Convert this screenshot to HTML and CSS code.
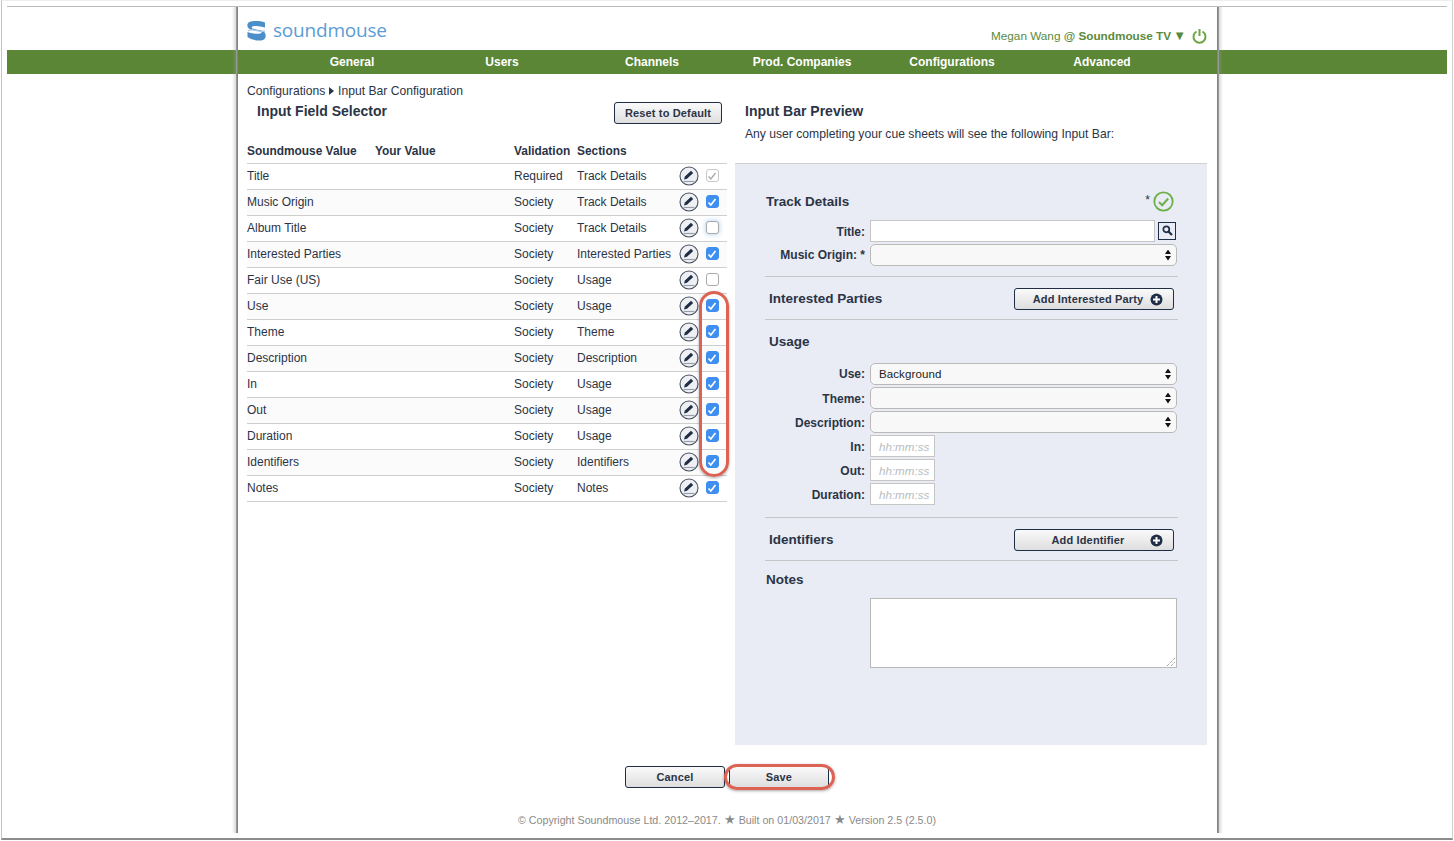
FILE: index.html
```html
<!DOCTYPE html>
<html lang="en">
<head>
<meta charset="utf-8">
<title>Input Bar Configuration</title>
<link rel="stylesheet" href="styles.css">
</head>
<body>
<div class="window">
  <div class="viewport">
    <div class="column">
      <header class="top">
        <div class="logo">
          <svg class="logo-mark" width="19" height="20" viewBox="0 0 19 20"><path d="M18 1.500C13-.2 6-.3 2.500 1 -.5 2.300-.3 6.500 2.500 8c3.500 1.800 9 1.500 11.500 2.800.9.5.9 1.100 0 1.400-3.500 1-8.500.6-13.500-1.200v5c5 3.500 12 4.300 15.500 3C19.500 17.500 19.500 12.500 16.500 10.500 13 8.500 7.500 8.800 5.200 7.200 4.300 6.500 4.600 5.600 6 5.300c4-.6 8 0 12 1.300z" fill="#4a8fc9"/><path d="M1 9.800c3-1.200 6-1 9-.1s5 .9 8 .1" fill="none" stroke="#a8cbe8" stroke-width="1.300"/></svg>
          <span class="logo-text">soundmouse</span>
        </div>
        <div class="user">
          <span>Megan Wang <b>@ Soundmouse TV</b></span>
          <span class="user-caret">▼</span>
          <svg class="power" width="15" height="16" viewBox="0 0 15 16"><path d="M4.500 3.500a6 6 0 1 0 6 0" fill="none" stroke="#6fa544" stroke-width="2"/><path d="M7.500 1v7" fill="none" stroke="#6fa544" stroke-width="2"/></svg>
        </div>
      </header>
      <nav class="nav">
        <a>General</a><a>Users</a><a>Channels</a><a>Prod. Companies</a><a>Configurations</a><a>Advanced</a>
      </nav>
      <main class="main">
        <section class="left">
          <div class="crumb">Configurations <span class="crumb-arrow"></span> Input Bar Configuration</div>
          <div class="title-row">
            <h1 class="title">Input Field Selector</h1>
            <button class="btn reset">Reset to Default</button>
          </div>
          <div class="grid head"><span>Soundmouse Value</span><span>Your Value</span><span>Validation</span><span>Sections</span></div>

          <div class="grid row"><span>Title</span><span></span><span>Required</span><span>Track Details</span><span class="edit"><svg width="20" height="20" viewBox="0 0 20 20"><use href="#pen"/></svg></span><span class="box off"><svg width="10" height="10" viewBox="0 0 10 10"><path d="M1.500 5.500l2.300 2.500 4.700-6" fill="none" stroke="#aaa" stroke-width="1.300"/></svg></span></div>
          <div class="grid row alt"><span>Music Origin</span><span></span><span>Society</span><span>Track Details</span><span class="edit"><svg width="20" height="20" viewBox="0 0 20 20"><use href="#pen"/></svg></span><span class="box on"><svg width="10" height="10" viewBox="0 0 10 10"><use href="#tick"/></svg></span></div>
          <div class="grid row"><span>Album Title</span><span></span><span>Society</span><span>Track Details</span><span class="edit"><svg width="20" height="20" viewBox="0 0 20 20"><use href="#pen"/></svg></span><span class="box focus"></span></div>
          <div class="grid row alt"><span>Interested Parties</span><span></span><span>Society</span><span>Interested Parties</span><span class="edit"><svg width="20" height="20" viewBox="0 0 20 20"><use href="#pen"/></svg></span><span class="box on"><svg width="10" height="10" viewBox="0 0 10 10"><use href="#tick"/></svg></span></div>
          <div class="grid row"><span>Fair Use (US)</span><span></span><span>Society</span><span>Usage</span><span class="edit"><svg width="20" height="20" viewBox="0 0 20 20"><use href="#pen"/></svg></span><span class="box"></span></div>
          <div class="grid row alt"><span>Use</span><span></span><span>Society</span><span>Usage</span><span class="edit"><svg width="20" height="20" viewBox="0 0 20 20"><use href="#pen"/></svg></span><span class="box on"><svg width="10" height="10" viewBox="0 0 10 10"><use href="#tick"/></svg></span></div>
          <div class="grid row"><span>Theme</span><span></span><span>Society</span><span>Theme</span><span class="edit"><svg width="20" height="20" viewBox="0 0 20 20"><use href="#pen"/></svg></span><span class="box on"><svg width="10" height="10" viewBox="0 0 10 10"><use href="#tick"/></svg></span></div>
          <div class="grid row alt"><span>Description</span><span></span><span>Society</span><span>Description</span><span class="edit"><svg width="20" height="20" viewBox="0 0 20 20"><use href="#pen"/></svg></span><span class="box on"><svg width="10" height="10" viewBox="0 0 10 10"><use href="#tick"/></svg></span></div>
          <div class="grid row"><span>In</span><span></span><span>Society</span><span>Usage</span><span class="edit"><svg width="20" height="20" viewBox="0 0 20 20"><use href="#pen"/></svg></span><span class="box on"><svg width="10" height="10" viewBox="0 0 10 10"><use href="#tick"/></svg></span></div>
          <div class="grid row alt"><span>Out</span><span></span><span>Society</span><span>Usage</span><span class="edit"><svg width="20" height="20" viewBox="0 0 20 20"><use href="#pen"/></svg></span><span class="box on"><svg width="10" height="10" viewBox="0 0 10 10"><use href="#tick"/></svg></span></div>
          <div class="grid row"><span>Duration</span><span></span><span>Society</span><span>Usage</span><span class="edit"><svg width="20" height="20" viewBox="0 0 20 20"><use href="#pen"/></svg></span><span class="box on"><svg width="10" height="10" viewBox="0 0 10 10"><use href="#tick"/></svg></span></div>
          <div class="grid row alt"><span>Identifiers</span><span></span><span>Society</span><span>Identifiers</span><span class="edit"><svg width="20" height="20" viewBox="0 0 20 20"><use href="#pen"/></svg></span><span class="box on"><svg width="10" height="10" viewBox="0 0 10 10"><use href="#tick"/></svg></span></div>
          <div class="grid row"><span>Notes</span><span></span><span>Society</span><span>Notes</span><span class="edit"><svg width="20" height="20" viewBox="0 0 20 20"><use href="#pen"/></svg></span><span class="box on"><svg width="10" height="10" viewBox="0 0 10 10"><use href="#tick"/></svg></span></div>
        </section>

        <section class="right">
          <h2 class="preview-title">Input Bar Preview</h2>
          <p class="preview-sub">Any user completing your cue sheets will see the following Input Bar:</p>
          <div class="panel">
            <div class="sec-track">
              <h3 class="sec-name">Track Details</h3>
              <span class="star">*</span>
              <svg class="ok" width="21" height="21" viewBox="0 0 21 21"><circle cx="10.500" cy="10.500" r="9.200" fill="none" stroke="#6fb04b" stroke-width="1.800"/><path d="M6 11l3.200 3.200L15.200 7.500" fill="none" stroke="#6fb04b" stroke-width="2"/></svg>
            </div>
            <div class="field f-title"><label>Title:</label><span class="input wide"></span><span class="search"><svg width="11" height="11" viewBox="0 0 11 11"><circle cx="4.300" cy="4.300" r="3" fill="none" stroke="#1f2d45" stroke-width="1.700"/><path d="M6.500 6.500l3.500 3.500" stroke="#1f2d45" stroke-width="2.200"/></svg></span></div>
            <div class="field f-high"><label>Music Origin: *</label><span class="select"><span></span><span class="updown"></span></span></div>
            <div class="rule r1"></div>
            <div class="bar"><h3 class="sec-name in">Interested Parties</h3><button class="btn add">Add Interested Party<svg class="plus" width="13" height="13" viewBox="0 0 13 13"><use href="#plus"/></svg></button></div>
            <div class="rule r2"></div>
            <h3 class="sec-name in usage">Usage</h3>
            <div class="field f-high"><label>Use:</label><span class="select"><span>Background</span><span class="updown"></span></span></div>
            <div class="field"><label>Theme:</label><span class="select"><span></span><span class="updown"></span></span></div>
            <div class="field"><label>Description:</label><span class="select"><span></span><span class="updown"></span></span></div>
            <div class="field"><label>In:</label><span class="input time">hh:mm:ss</span></div>
            <div class="field"><label>Out:</label><span class="input time">hh:mm:ss</span></div>
            <div class="field"><label>Duration:</label><span class="input time">hh:mm:ss</span></div>
            <div class="rule r3"></div>
            <div class="bar"><h3 class="sec-name in">Identifiers</h3><button class="btn add">Add Identifier<svg class="plus" width="13" height="13" viewBox="0 0 13 13"><use href="#plus"/></svg></button></div>
            <div class="rule r4"></div>
            <h3 class="sec-name notes">Notes</h3>
            <div class="textarea"><svg class="grip" width="8" height="8" viewBox="0 0 8 8"><path d="M0 8L8 0M4 8L8 4" stroke="#777" stroke-width="1" stroke-dasharray="1 1"/></svg></div>
          </div>
        </section>
      </main>
      <div class="actions">
        <button class="btn act">Cancel</button>
        <button class="btn act">Save</button>
      </div>
      <footer class="foot">© Copyright Soundmouse Ltd. 2012–2017. <span class="foot-star">★</span> Built on 01/03/2017 <span class="foot-star">★</span> Version 2.5 (2.5.0)</footer>
      <div class="mark mark-checks"></div>
      <div class="mark mark-save"></div>
    </div>
  </div>
</div>
<svg class="defs" width="0" height="0">
  <defs>
    <g id="pen">
      <circle cx="10" cy="10" r="9" fill="#eef0f4" stroke="#4a5261" stroke-width="1.100"/>
      <path d="M5 13.600l.9-3 6.100-5.800 2.200 2.200-6.200 5.800z" fill="#1f2d45"/>
      <path d="M4.500 15.500h11" stroke="#9aa0ab" stroke-width="1.200"/>
    </g>
    <path id="tick" d="M1.500 5.500l2.300 2.500 4.700-6" fill="none" stroke="#fff" stroke-width="1.700"/>
    <g id="plus">
      <circle cx="6.500" cy="6.500" r="6" fill="#1f2d45"/>
      <path d="M6.500 3v7M3 6.500h7" stroke="#fff" stroke-width="2"/>
    </g>
  </defs>
</svg>
</body>
</html>
```
FILE: styles.css
```css
* { box-sizing: border-box; }
html, body { margin: 0; padding: 0; }
body {
  background: #fff;
  font-family: "Liberation Sans", Arial, sans-serif;
  font-size: 12px;
  color: #2b3446;
  overflow: hidden;
}
.defs { position: absolute; }
.window {
  width: 1452px;
  height: 840px;
  margin-left: 1px;
  padding: 5px 5px 0 5px;
  background: #fff;
  border-left: 1px solid #c4c4c4;
  border-right: 1px solid #d0d0d0;
  border-bottom: 2px solid #8c8c8c;
  border-top: 1px solid #eee;
}
.viewport {
  height: 827px;
  border-top: 1px solid #bdbdbd;
  padding-left: 229px;
}
.column {
  position: relative;
  width: 982px;
  height: 826px;
  padding: 0 11px;
  background: #fff;
}
.column::before,
.column::after {
  content: "";
  position: absolute;
  top: 0;
  bottom: 0;
  width: 6px;
  z-index: 2;
  background: linear-gradient(to right, #777 0, #999 1.500px, rgba(150,150,150,.35) 2px, rgba(150,150,150,0) 6px);
}
.column::before {
  left: -4px;
  transform: scaleX(-1);
}
.column::after {
  right: -5px;
}
.top {
  height: 43px;
  display: flex;
  justify-content: space-between;
}
.logo { display: flex; align-items: flex-start; gap: 7px; padding-top: 14px; }
.logo-mark { display: block; }
.logo-text {
  font-family: "Open Sans", sans-serif;
  font-weight: 400;
  font-size: 19px;
  line-height: 20px;
  margin-top: -1px;
  color: #5b9dd4;
  letter-spacing: -.2px;
}
.user {
  display: flex;
  align-items: center;
  height: 16px;
  margin-top: 20px;
  color: #5b8a3c;
  font-size: 11.750px;
  white-space: nowrap;
}
.user b { font-weight: bold; }
.user-caret { margin-left: 2px; font-size: 13px; }
.power { margin: 2px 0 0 6px; }
.nav {
  display: flex;
  height: 24px;
  margin: 0 -240px;
  padding-left: 270px;
  width: 1440px;
  background: #5a8636;
  color: #fff;
  font-weight: bold;
  line-height: 24px;
  font-size: 12px;
}
.nav a { width: 150px; text-align: center; }
.main {
  display: flex;
  height: 671px;
  padding-top: 9px;
}
.left { width: 480px; margin-right: 8px; }
.crumb { height: 16px; line-height: 16px; font-size: 12.150px; }
.crumb-arrow {
  display: inline-block;
  border-left: 5px solid #2b3446;
  border-top: 4px solid transparent;
  border-bottom: 4px solid transparent;
  margin: 0 .5px;
}
.title-row {
  height: 40px;
  display: flex;
  align-items: flex-start;
  justify-content: space-between;
  padding: 3px 5px 0 10px;
}
.title { margin: -1px 0 0; font-size: 14px; line-height: 20px; }
.btn {
  font-family: "Liberation Sans", Arial, sans-serif;
  font-weight: bold;
  font-size: 11px;
  color: #2b3446;
  border: 1px solid #1f2d45;
  border-radius: 3px;
  background: linear-gradient(#fafafa, #dedede);
  padding: 0;
  letter-spacing: .15px;
}
.reset { width: 108px; height: 22px; }
.grid {
  display: grid;
  grid-template-columns: 128px 139px 63px 100px 24px 22px 4px;
  align-items: center;
  border-bottom: 1px solid #cfcfcf;
}
.head { height: 25px; font-weight: bold; font-size: 11.900px; }
.row { height: 26px; padding-bottom: 2px; }
.alt { background: #fbfbfb; }
.edit { display: flex; justify-content: center; }
.edit svg { display: block; }
.box {
  width: 13px;
  height: 13px;
  justify-self: center;
  border: 1px solid #a9a9a9;
  border-radius: 3px;
  background: #fff;
  display: flex;
  align-items: center;
  justify-content: center;
}
.box.on { background: #3f8ff0; border-color: #3f8ff0; }
.box.off { border-color: #c9c9c9; }
.box.focus { box-shadow: 0 0 4px 1px #c4d9f5; }
.right { width: 472px; }
.preview-title { margin: 18px 0 0 10px; height: 20px; font-size: 14px; line-height: 20px; }
.preview-sub { margin: 3px 0 0 10px; height: 39px; line-height: 20px; font-size: 12.150px; }
.panel {
  height: 582px;
  background: #e9ecf4;
  border-top: 1px solid #cfcfcf;
  padding: 0 30px;
}
.sec-track {
  display: flex;
  align-items: center;
  height: 54px;
  padding: 20px 3px 0 0;
}
.sec-track .sec-name { margin: 2px 0 0 1px; }
.sec-name { margin: 0; font-size: 13.500px; line-height: 18px; }
.star { margin-left: auto; margin-right: 3px; margin-top: -2px; }
.ok { display: block; }
.field { display: flex; align-items: center; height: 24px; }
.f-title { height: 25px; }
.field label {
  width: 105px;
  margin-top: 2px;
  text-align: right;
  font-weight: bold;
  padding-right: 5px;
}
.f-title label { margin-top: 3px; }
.f-high label { margin-top: 0; }
.input {
  display: block;
  height: 22px;
  background: #fff;
  border: 1px solid #c6c6c6;
}
.wide { width: 285px; }
.time {
  width: 65px;
  padding-left: 8px;
  line-height: 22px;
  font-size: 11.600px;
  color: #b9bcc2;
  font-style: italic;
}
.search {
  width: 18px;
  height: 18px;
  margin-left: 3px;
  border: 1px solid #1f2d45;
  background: #e9ecf4;
  display: flex;
  align-items: center;
  justify-content: center;
}
.select {
  width: 307px;
  height: 22px;
  display: flex;
  align-items: center;
  justify-content: space-between;
  padding: 0 5px 0 8px;
  background: #f8f8f8;
  border: 1px solid #b9b9b9;
  border-radius: 5px;
  color: #222;
  font-size: 11.500px;
  letter-spacing: .1px;
}
.updown {
  width: 6px;
  height: 11px;
  background: #111;
  clip-path: polygon(50% 0, 100% 40%, 0 40%, 50% 0, 0 60%, 100% 60%, 50% 100%, 0 60%);
}
.rule { height: 1px; background: #c4c6ca; width: 413px; }
.r1 { margin-top: 9px; }
.r3 { margin-top: 11px; }
.bar {
  height: 42px;
  width: 409px;
  padding: 1px 0 0 4px;
  display: flex;
  align-items: center;
  justify-content: space-between;
}
.usage { margin: 13px 0 10px 4px; height: 19px; }
.add {
  position: relative;
  width: 160px;
  height: 22px;
  padding-right: 12px;
}
.plus { position: absolute; right: 10px; top: 4px; }
.notes { margin: 10px 0 9px 1px; }
.textarea {
  position: relative;
  width: 307px;
  height: 70px;
  margin-left: 105px;
  background: #fff;
  border: 1px solid #b9b9b9;
}
.grip { position: absolute; right: 1px; bottom: 1px; }
.actions {
  display: flex;
  gap: 4px;
  height: 22px;
  margin-top: 21px;
  padding-left: 378px;
}
.act { width: 100px; height: 22px; }
.foot {
  margin-top: 24px;
  text-align: center;
  line-height: 16px;
  font-size: 10.700px;
  color: #8a8a8a;
}
.foot-star { font-size: 13px; }
.mark {
  position: absolute;
  border: 3px solid #dc6353;
  box-shadow: 0 1px 3px rgba(0,0,0,.35);
  z-index: 3;
}
.mark-checks { left: 463px; top: 284px; width: 30px; height: 186px; border-radius: 15px; }
.mark-save { left: 488px; top: 757px; width: 111px; height: 26px; border-radius: 13px; }
```
